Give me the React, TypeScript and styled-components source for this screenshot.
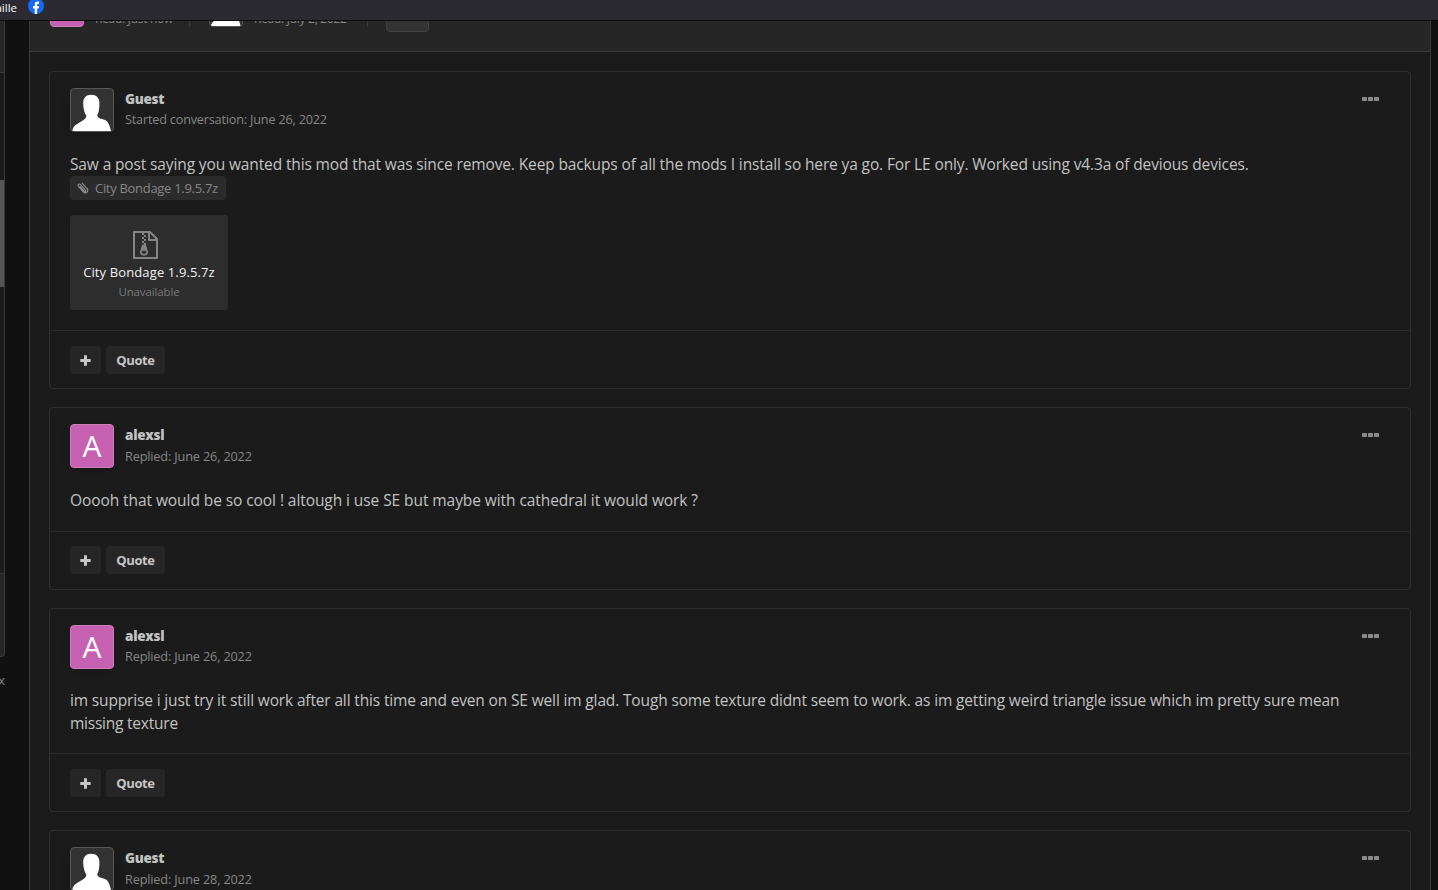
import React from "react";
import styled, { createGlobalStyle } from "styled-components";

const Global = createGlobalStyle`
  *{box-sizing:border-box}
  html,body{margin:0;height:890px;overflow:hidden;background:#111}
  body{font-family:"Open Sans","Noto Sans",sans-serif;color:#c2c2c2}
`;
const Screen = styled.div`width:1438px;height:890px;overflow:hidden;display:flex;flex-direction:column;`;
const BookmarkBar = styled.header`
  height:21px;flex:none;background:#2b2a33;border-bottom:1px solid #0c0c0d;display:flex;align-items:flex-start;
  color:#fbfbfe;font-size:11.5px;line-height:15px;overflow:hidden;
  svg{margin:-2px 0 0 11px;flex:none}
`;
const BookmarkLabel = styled.span`width:17px;display:flex;justify-content:flex-end;white-space:nowrap;`;
const Page = styled.div`flex:1;display:flex;min-height:0;overflow:hidden;`;
const Sidebar = styled.aside`width:5px;flex:none;font-size:13px;color:#858585;`;
const SideHead = styled.div`height:52px;background:#262626;border-right:1px solid #3a3a3a;border-bottom:1px solid #3a3a3a;`;
const SideList = styled.div`height:500px;padding-top:107px;background:#1b1b1b;border-right:1px solid #3a3a3a;`;
const Thumb = styled.div`height:107px;background:#565656;`;
const SideFoot = styled.div`height:84px;background:#262626;border:1px solid #3a3a3a;border-left:0;border-radius:0 0 4px 0;`;
const SideNote = styled.div`display:flex;justify-content:flex-end;line-height:18px;margin-top:14px;`;
const Panel = styled.main`width:1402px;margin-left:24px;flex:none;background:#1b1b1b;border:solid #3a3a3a;border-width:0 1px;`;
const Readers = styled.div`
  height:31px;background:#262626;border-bottom:1px solid #3a3a3a;padding-left:20px;display:flex;align-items:flex-start;
  font-size:12px;line-height:18px;color:#858585;overflow:hidden;
`;
const ReaderAvatar = styled.div<{ $guest?: boolean }>`
  width:34px;height:34px;margin-top:-28px;margin-left:${p => (p.$guest ? 19 : 0)}px;border-radius:4px;flex:none;overflow:hidden;
  background:${p => (p.$guest ? "#333" : "#c661b1")};border:1px solid ${p => (p.$guest ? "#555" : "#cf7fbf")};
  svg{display:block;margin:-1px}
`;
const ReaderText = styled.span<{ $w: number }>`
  width:${p => p.$w}px;margin:-11px 0 0 11px;white-space:nowrap;letter-spacing:-.28px;flex:none;
`;
const Separator = styled.i`width:1px;height:26px;margin-top:-20px;background:#3d3d3d;flex:none;`;
const MoreReaders = styled.div`width:43px;height:32px;margin:-21px 0 0 18px;background:#333;border:1px solid #424242;border-radius:4px;`;
const Posts = styled.div`padding:19px 19px 0;display:flex;flex-direction:column;`;
const Card = styled.article`border:1px solid #2f2f2f;border-radius:4px;margin-bottom:18px;flex:none;`;
const Main = styled.div<{ $h: number }>`height:${p => p.$h}px;padding:16px 20px 0;`;
const PostHead = styled.div`display:flex;height:44px;`;
const Avatar = styled.div<{ $guest?: boolean }>`
  width:44px;height:44px;flex:none;overflow:hidden;border-radius:4px;border:1px solid ${p => (p.$guest ? "#575757" : "#cf7cbd")};
  background:${p => (p.$guest ? "#333" : "#c661b1")};box-shadow:0 5px 10px rgba(0,0,0,.12);
  color:#fff;font:500 30px/41px "Open Sans",sans-serif;text-align:center;
  svg{display:block;margin:-1px}
`;
const Author = styled.div`margin-left:11px;flex:1;white-space:nowrap;`;
const Name = styled.div`font-size:13.5px;font-weight:800;line-height:20px;margin-top:1px;letter-spacing:-.28px;`;
const Meta = styled.div<{ $ls: number; $top: number }>`font-size:12.7px;line-height:20px;color:#868686;margin-top:${p => p.$top}px;letter-spacing:${p => p.$ls}px;`;
const Dots = styled.div`
  display:flex;gap:1px;margin:9px 11px 0 0;height:4px;
  i{width:5px;height:4px;background:#8a8a8a;border-radius:.5px}
`;
const Message = styled.div<{ $top: number }>`margin-top:${p => p.$top}px;font-size:15.5px;line-height:23px;white-space:nowrap;`;
const Line = styled.div<{ $ls: number }>`letter-spacing:${p => p.$ls}px;`;
const FileChip = styled.div`
  display:flex;align-items:center;width:156px;height:24px;padding-left:7px;background:#2b2b2b;border-radius:3px;
  font-size:13px;line-height:24px;color:#868686;letter-spacing:-.3px;white-space:nowrap;
  svg{margin-right:6px;flex:none}
`;
const Attachment = styled.div`
  width:158px;height:95px;margin-top:15px;padding-top:16px;background:#2d2d2d;border-radius:3px;text-align:center;white-space:nowrap;
  svg{display:block;margin-left:63px}
`;
const FileName = styled.div`color:#f2f2f2;font-size:13px;line-height:18px;margin-top:4px;letter-spacing:.12px;`;
const FileState = styled.div`color:#7a7a7a;font-size:11.5px;line-height:18px;margin-top:2px;letter-spacing:-.12px;`;
const Controls = styled.footer<{ $pad: number }>`height:58px;border-top:1px solid #2b2b2b;padding:${p => p.$pad}px 20px 0;display:flex;gap:5px;`;
const Button = styled.button<{ $w: number }>`
  width:${p => p.$w}px;height:28px;padding:0;border:0;border-radius:4px;background:#262626;color:#c6c6c6;
  font:700 13px/28px "Open Sans",sans-serif;letter-spacing:-.4px;display:flex;align-items:center;justify-content:center;
`;

const Silhouette = ({ size = 44 }: { size?: number }) => (
  <svg width={size} height={size} viewBox="0 0 44 44">
    <path fill="#fff" d="M2 44C3 38 6 36.5 9.5 34.5C13 32.5 16.3 31 16.3 27.5C14.5 25 13.2 20 13.2 15C13.2 10 16 6.8 21.2 6.8C26.5 6.8 29.4 10 29.4 15C29.4 20 29 24.5 27.3 27C27.3 30.5 31 30.5 35 32C39 34 40 39 41.3 44Z" />
  </svg>
);
const Plus = () => (
  <svg width="11" height="11" viewBox="0 0 11 11"><path d="M5.5 .3v10.4M.3 5.5h10.4" stroke="#c6c6c6" strokeWidth="3" strokeLinecap="butt" /></svg>
);
const Clip = () => (
  <svg width="12" height="12" viewBox="0 0 12 12" fill="none" stroke="#8c8c8c" strokeWidth="1.15" strokeLinecap="round">
    <path d="M3.2 4.6L7.2 9.4C8.2 10.5 9.4 9.5 8.5 8.4L3.8 2.8C2.2 1 .2 2.7 1.6 4.5L6.2 9.8C8.5 12.3 12.4 9.5 10 6.6L5.4 1.3" />
  </svg>
);
const Zip = () => (
  <svg width="25" height="28" viewBox="0 0 25 28" fill="none" stroke="#858585" strokeWidth="2">
    <path d="M1 1H17L24 8V27H1ZM16 1V9H24" strokeLinejoin="round" />
    <path d="M9 3h2M11 5h2M9 7h2M11 9h2M9 11h2M11 13h2" />
    <path fill="#858585" stroke="none" fillRule="evenodd" d="M9.2 13.5h3.6L15 20.5C15.8 26 6.2 26 7 20.5ZM11 19.6c-3 0-3 3.2 0 3.2s3-3.2 0-3.2" />
  </svg>
);

type Post = { guest?: boolean; name: string; meta: string; metaTop: number; metaLs: number; h: number; pad: number; top: number; lines: [string, number][]; file?: boolean };
const posts: Post[] = [
  { guest: true, name: "Guest", meta: "Started conversation: June 26, 2022", metaTop: 0, metaLs: -0.2, h: 258, pad: 15, top: 21, file: true, lines: [["Saw a post saying you wanted this mod that was since remove. Keep backups of all the mods I install so here ya go. For LE only. Worked using v4.3a of devious devices.", -0.13]] },
  { name: "alexsl", meta: "Replied: June 26, 2022", metaTop: 1, metaLs: -0.15, h: 123, pad: 14, top: 21, lines: [["Ooooh that would be so cool ! altough i use SE but maybe with cathedral it would work ?", -0.075]] },
  { name: "alexsl", meta: "Replied: June 26, 2022", metaTop: 0, metaLs: -0.15, h: 144, pad: 15, top: 20, lines: [["im supprise i just try it still work after all this time and even on SE well im glad. Tough some texture didnt seem to work. as im getting weird triangle issue which im pretty sure mean", -0.15], ["missing texture", -0.23]] },
  { guest: true, name: "Guest", meta: "Replied: June 28, 2022", metaTop: 1, metaLs: -0.15, h: 200, pad: 15, top: 21, lines: [] },
];

export default function App() {
  return (
    <Screen>
      <Global />
      <BookmarkBar>
        <BookmarkLabel>aille</BookmarkLabel>
        <svg width="16" height="16" viewBox="0 0 16 16"><circle cx="8" cy="8" r="8" fill="#1668f5" /><path fill="#fff" d="M6.7 15.9V10.5H5V8h1.7V6.8C6.7 4.2 8 3.2 11 3.6v2.1C9.6 5.6 9.1 5.9 9.1 7v1H11l-.4 2.5H9.1v5.4Z" /></svg>
      </BookmarkBar>
      <Page>
        <Sidebar>
          <SideHead />
          <SideList><Thumb /></SideList>
          <SideFoot />
          <SideNote>x</SideNote>
        </Sidebar>
        <Panel>
          <Readers>
            <ReaderAvatar />
            <ReaderText $w={94}>Read: Just now</ReaderText>
            <Separator />
            <ReaderAvatar $guest><Silhouette size={34} /></ReaderAvatar>
            <ReaderText $w={113}>Read: July 2, 2022</ReaderText>
            <Separator />
            <MoreReaders />
          </Readers>
          <Posts>
            {posts.map((p, i) => (
              <Card key={i}>
                <Main $h={p.h}>
                  <PostHead>
                    <Avatar $guest={p.guest}>{p.guest ? <Silhouette /> : "A"}</Avatar>
                    <Author>
                      <Name>{p.name}</Name>
                      <Meta $ls={p.metaLs} $top={p.metaTop}>{p.meta}</Meta>
                    </Author>
                    <Dots><i /><i /><i /></Dots>
                  </PostHead>
                  <Message $top={p.top}>
                    {p.lines.map(([t, ls]) => <Line key={t} $ls={ls}>{t}</Line>)}
                  </Message>
                  {p.file && (
                    <>
                      <FileChip><Clip />City Bondage 1.9.5.7z</FileChip>
                      <Attachment><Zip /><FileName>City Bondage 1.9.5.7z</FileName><FileState>Unavailable</FileState></Attachment>
                    </>
                  )}
                </Main>
                <Controls $pad={p.pad}>
                  <Button $w={31} aria-label="Add"><Plus /></Button>
                  <Button $w={59}>Quote</Button>
                </Controls>
              </Card>
            ))}
          </Posts>
        </Panel>
      </Page>
    </Screen>
  );
}
